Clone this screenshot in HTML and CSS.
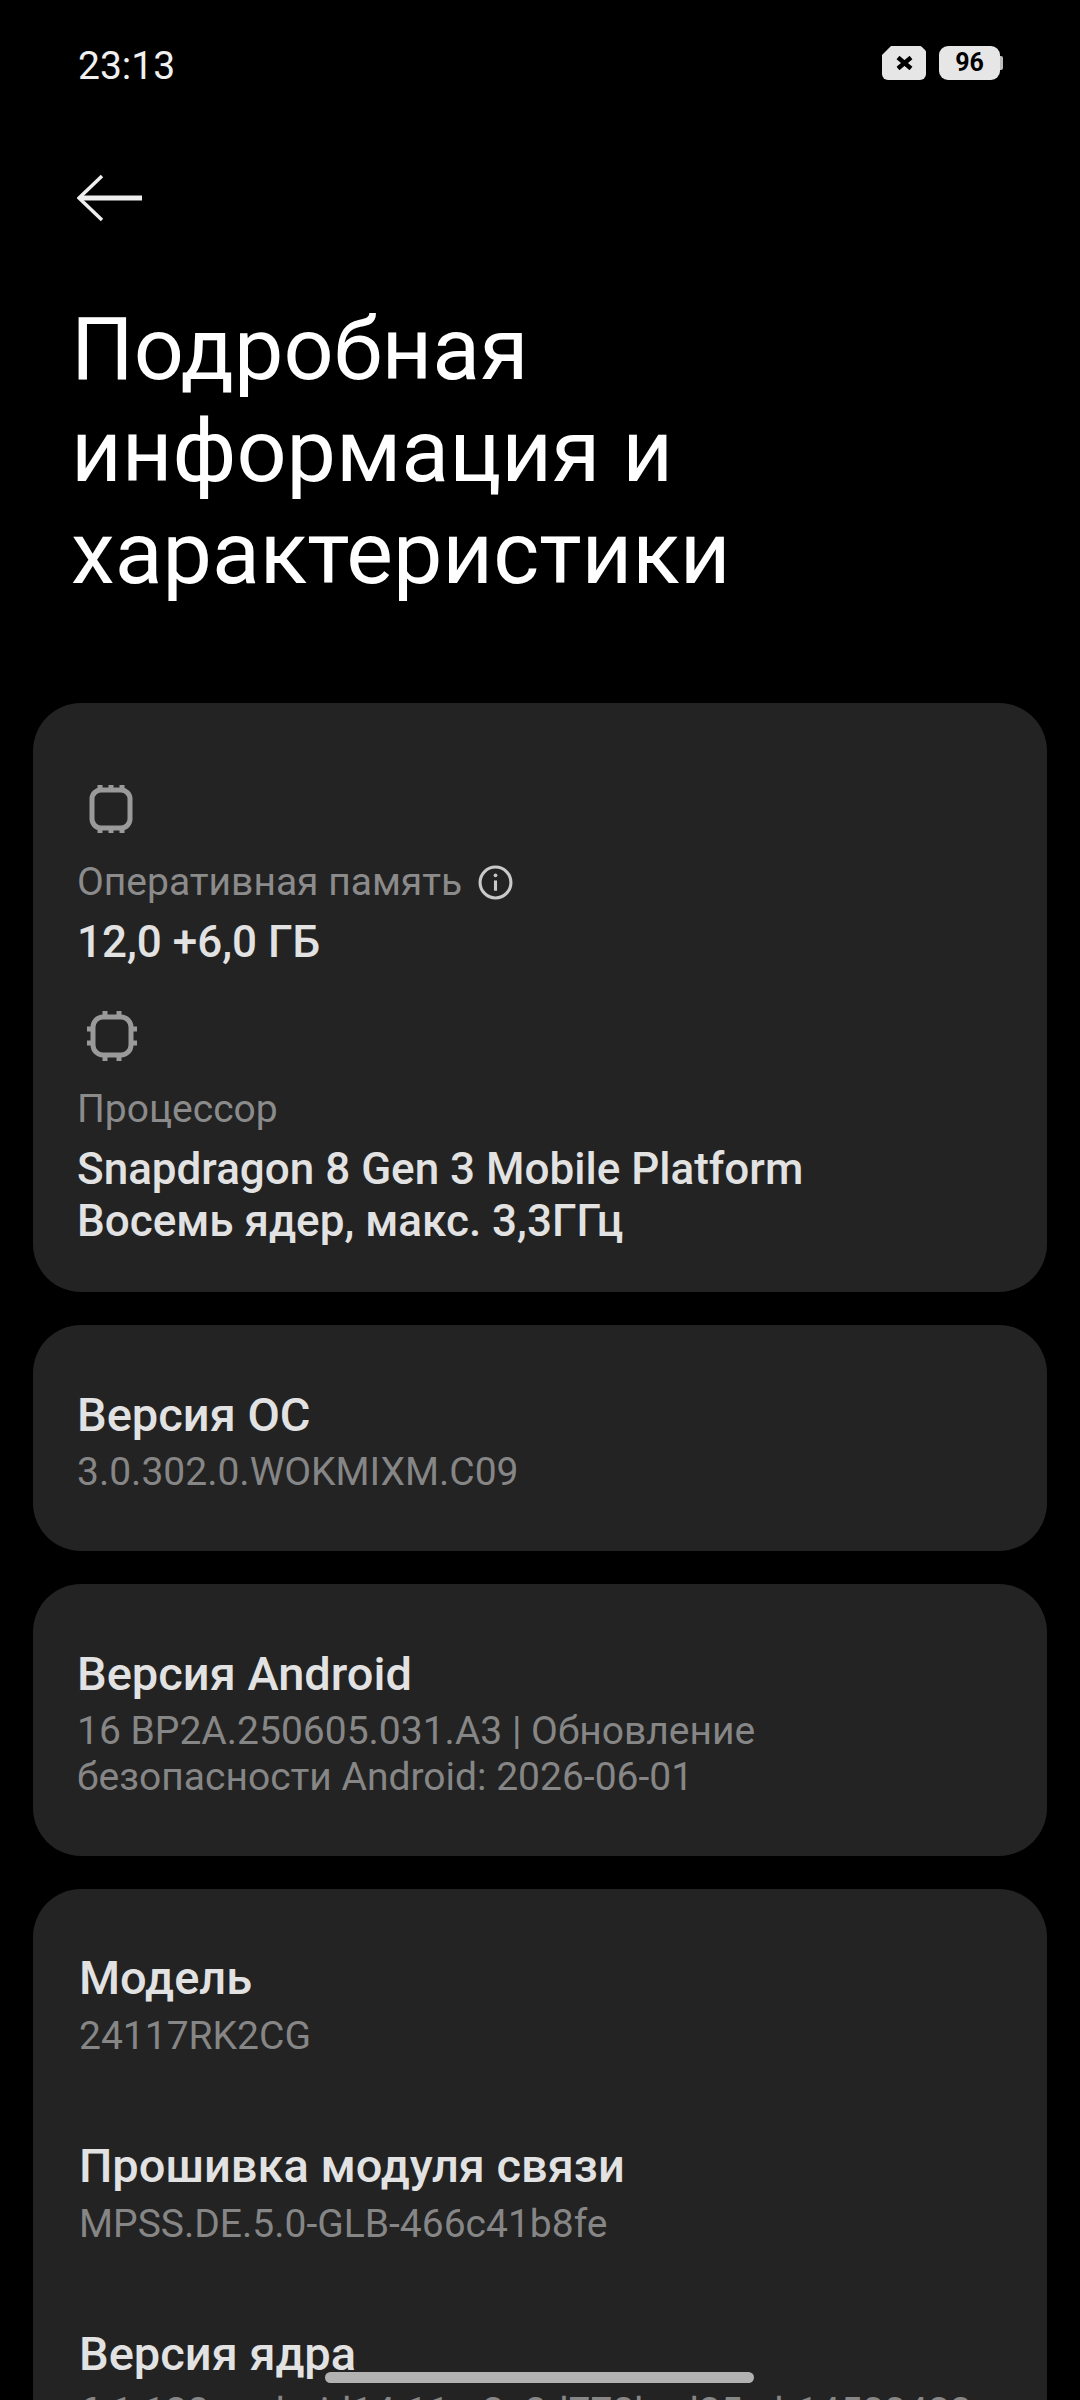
FILE: index.html
```html
<!DOCTYPE html>
<html lang="ru">
<head>
<meta charset="utf-8">
<title>Подробная информация и характеристики</title>
<link rel="stylesheet" href="styles.css">
</head>
<body>
<div class="screen">
  <div class="status">
    <span class="time">23:13</span>
    <div class="status-icons">
      <span class="sim"><svg viewBox="0 0 17 14" class="sim-x"><path d="M2 1.5L15 12.5M15 1.5L2 12.5"/></svg></span>
      <div class="battery-wrap"><span class="battery">96</span><span class="nub"></span></div>
    </div>
  </div>
  <svg class="back" viewBox="0 0 66 48"><path class="head" d="M25 2L2 24L25 46"/><path class="shaft" d="M3 24H65"/></svg>
  <h1 class="title">Подробная<br>информация и<br>характеристики</h1>
  <section class="card card-specs">
    <svg class="chip chip-ram" viewBox="0 0 48 52"><rect x="5" y="7" width="38" height="38" rx="9"/><path d="M13 7V2M24 7V2M35 7V2M13 45V50M24 45V50M35 45V50"/></svg>
    <div class="label-row"><span class="label">Оперативная память</span>
      <svg class="info" viewBox="0 0 34 34"><circle cx="17" cy="17" r="15"/><path d="M17 15V25"/><circle class="dot" cx="17" cy="10" r="1.8"/></svg></div>
    <div class="value">12,0 +6,0 ГБ</div>
    <svg class="chip chip-cpu" viewBox="0 0 52 52"><rect x="7" y="7" width="38" height="38" rx="10"/><path d="M19 7V1M33 7V1M19 45V51M33 45V51M7 19H1M7 33H1M45 19H51M45 33H51"/></svg>
    <div class="label-row"><span class="label">Процессор</span></div>
    <div class="value">Snapdragon 8 Gen 3 Mobile Platform<br>Восемь ядер, макс. 3,3ГГц</div>
  </section>
  <section class="card card-info">
    <div class="heading">Версия ОС</div>
    <div class="sub">3.0.302.0.WOKMIXM.C09</div>
  </section>
  <section class="card card-info">
    <div class="heading">Версия Android</div>
    <div class="sub">16 BP2A.250605.031.A3 | Обновление<br>безопасности Android: 2026-06-01</div>
  </section>
  <section class="card card-list">
    <div class="item"><div class="heading">Модель</div><div class="sub">24117RK2CG</div></div>
    <div class="item"><div class="heading">Прошивка модуля связи</div><div class="sub">MPSS.DE.5.0-GLB-466c41b8fe</div></div>
    <div class="item"><div class="heading">Версия ядра</div><div class="sub nowrap">6.1.128-android14-11-g2c3d778bcd35-ab14500423</div></div>
  </section>
</div>
<div class="home"></div>
</body>
</html>
```
FILE: styles.css
```css
* { box-sizing: border-box; }
html, body { margin: 0; background: #000; }
body { width: 1080px; height: 2400px; overflow: hidden; position: relative; font-family: Roboto, "Noto Sans", sans-serif; }
.screen { display: flex; flex-direction: column; height: 2400px; overflow: hidden; padding: 0 33px; }
.status { display: flex; justify-content: space-between; align-items: center; height: 38px; margin-top: 44px; padding: 0 44px 0 45px; flex: none; }
.time { color: #f0f0f0; font-size: 39px; font-weight: 400; margin-top: 6px; }
.status-icons { display: flex; align-items: center; gap: 13px; }
.sim { display: flex; align-items: center; justify-content: center; width: 44px; height: 34px; background: #e6e6e6; border-radius: 6px; clip-path: polygon(9px 0, calc(100% - 5px) 0, 100% 5px, 100% 100%, 0 100%, 0 9px); }
.sim-x { width: 17px; height: 14px; fill: none; stroke: #000; stroke-width: 4.5; }
.battery-wrap { display: flex; align-items: center; }
.battery { width: 61px; height: 34px; background: #e6e6e6; border-radius: 9px; color: #000; font-size: 25px; font-weight: 700; text-align: center; line-height: 34px; }
.nub { width: 3px; height: 14px; background: #bdbdbd; border-radius: 0 2px 2px 0; }
.back { width: 66px; height: 48px; margin: 92px 0 0 44px; fill: none; stroke: #eee; flex: none; }
.head { stroke-width: 3.5; }
.shaft { stroke-width: 5; }
.title { margin: 76px 0 0 38px; color: #fff; font-size: 88px; font-weight: 400; line-height: 102px; flex: none; }
.card { background: #232323; border-radius: 48px; flex: none; margin-top: 33px; }
.card-specs { margin-top: 99px; padding: 80px 44px 0; height: 589px; }
.card-info { padding: 64px 44px 56px; }
.card-list { padding: 63px 46px 0; height: 600px; }
.chip { display: block; height: 52px; fill: none; stroke: #9a9a9a; stroke-width: 5; }
.chip-ram { width: 48px; margin: 0 0 2px 10px; }
.chip-cpu { width: 52px; margin: 42px 0 1px 9px; }
.label-row { display: flex; align-items: center; gap: 16px; margin-top: 22px; }
.label { color: #8b8b8b; font-size: 39px; line-height: 50px; }
.info { width: 35px; height: 35px; fill: none; stroke: #c9c9c9; stroke-width: 3; }
.info .dot { fill: #c9c9c9; stroke: none; }
.value { color: #e2e2e2; font-size: 44px; font-weight: 500; line-height: 52px; margin-top: 9px; }
.heading { color: #e2e2e2; font-size: 47px; font-weight: 500; line-height: 52px; }
.sub { color: #868686; font-size: 39px; line-height: 46px; margin-top: 8px; }
.item { margin-bottom: 81px; }
.item .sub { margin-top: 9px; }
.nowrap { white-space: nowrap; }
.home { position: absolute; left: 325px; top: 2372px; width: 429px; height: 11px; background: #b2b2b2; border-radius: 6px; }
```
